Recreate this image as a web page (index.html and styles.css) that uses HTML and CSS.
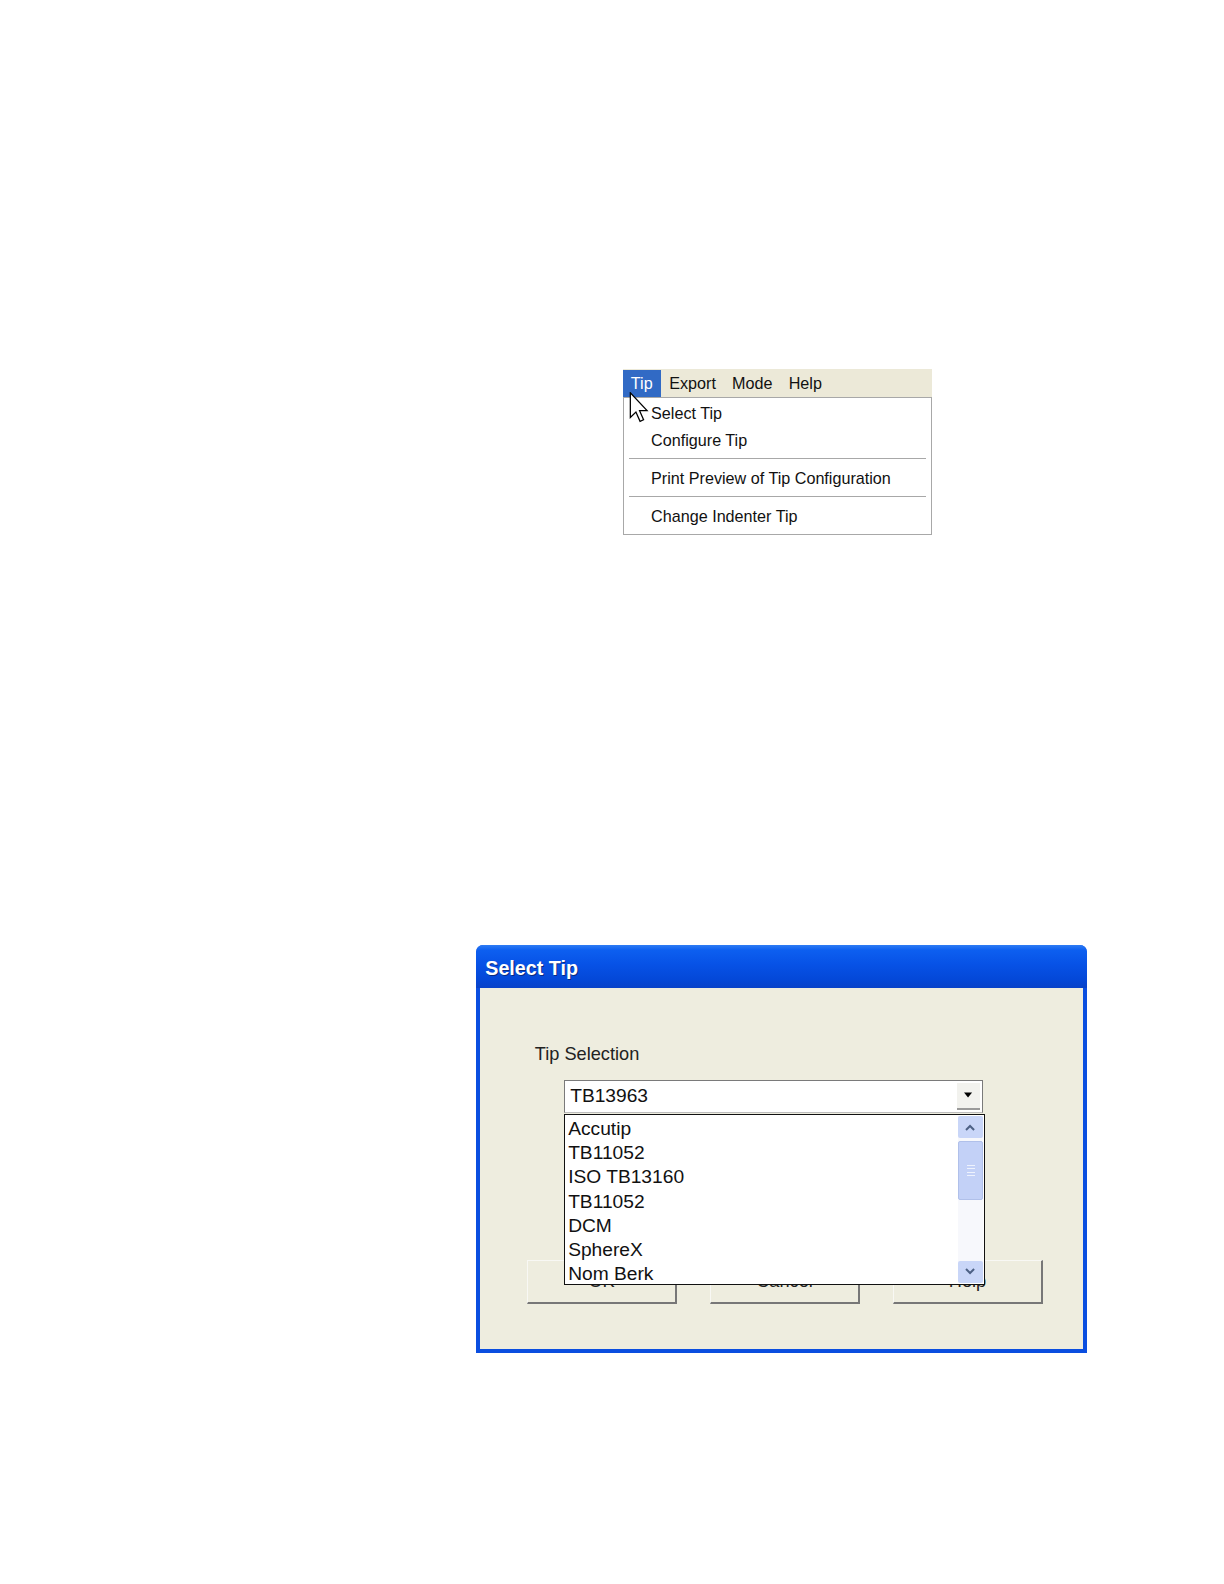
FILE: index.html
```html
<!DOCTYPE html>
<html>
<head>
<meta charset="utf-8">
<link rel="stylesheet" href="styles.css">
</head>
<body>
<div class="page">
  <div class="menu-wrap">
    <div class="menubar">
      <span class="mb-item active">Tip</span>
      <span class="mb-item">Export</span>
      <span class="mb-item">Mode</span>
      <span class="mb-item">Help</span>
    </div>
    <div class="dropdown">
      <div class="dd-item">Select Tip</div>
      <div class="dd-item">Configure Tip</div>
      <div class="dd-sep"></div>
      <div class="dd-item">Print Preview of Tip Configuration</div>
      <div class="dd-sep"></div>
      <div class="dd-item">Change Indenter Tip</div>
    </div>
    <svg class="cursor" width="20" height="30" viewBox="0 0 12 19">
      <path d="M0.5 0.5 L0.5 16 L4 12.6 L6.6 18.4 L8.8 17.4 L6.3 11.7 L11 11.7 Z" fill="#fff" stroke="#000" stroke-width="0.8" stroke-linejoin="miter"/>
    </svg>
  </div>

  <div class="dialog">
    <div class="titlebar">Select Tip</div>
    <div class="dlg-body">
      <div class="label">Tip Selection</div>
      <div class="combo-wrap">
        <div class="combo">
          <span class="combo-text">TB13963</span>
          <span class="combo-btn"><svg width="10" height="6" viewBox="0 0 10 6"><path d="M1 0.5 L9 0.5 L5 5.5 Z" fill="#000"/></svg></span>
        </div>
        <div class="listbox">
          <div class="items">
            <div class="li">Accutip</div>
            <div class="li">TB11052</div>
            <div class="li">ISO TB13160</div>
            <div class="li">TB11052</div>
            <div class="li">DCM</div>
            <div class="li">SphereX</div>
            <div class="li">Nom Berk</div>
          </div>
          <div class="scrollbar">
            <div class="sb-btn"><svg width="10" height="7" viewBox="0 0 10 7"><path d="M1 6 L5 2 L9 6" fill="none" stroke="#4d6185" stroke-width="2"/></svg></div>
            <div class="sb-thumb"><span></span><span></span><span></span><span></span></div>
            <div class="sb-track"></div>
            <div class="sb-btn"><svg width="10" height="7" viewBox="0 0 10 7"><path d="M1 1 L5 5 L9 1" fill="none" stroke="#4d6185" stroke-width="2"/></svg></div>
          </div>
        </div>
      </div>
      <div class="buttons">
        <div class="btn">OK</div>
        <div class="btn">Cancel</div>
        <div class="btn">Help</div>
      </div>
    </div>
  </div>
</div>
</body>
</html>
```

FILE: styles.css
```css
html, body {
  margin: 0;
  padding: 0;
  background: #fff;
  overflow: hidden;
}
.page {
  zoom: 1.011;
  width: 1210px;
  height: 1566px;
  overflow: hidden;
  padding-top: 365px;
  box-sizing: border-box;
  font-family: "Liberation Sans", Arial, sans-serif;
}

/* ---------- Menu ---------- */
.menu-wrap {
  position: relative;
  margin-left: 616px;
  width: 306px;
}
.menubar {
  height: 28px;
  background: #ece9d8;
  display: flex;
  align-items: center;
  font-size: 16px;
  color: #111;
}
.mb-item {
  padding: 0 8px;
  height: 27px;
  line-height: 27px;
}
.mb-item.active {
  background: #316ac5;
  color: #fff;
  width: 22px;
}
.dropdown {
  background: #fff;
  border: 1px solid #a8a8a8;
  box-sizing: border-box;
  width: 306px;
  padding: 2px 0 4px;
  font-size: 16px;
  color: #111;
}
.dd-item {
  height: 26px;
  line-height: 26px;
  padding-left: 27px;
}
.dd-sep {
  height: 1px;
  background: #a8a8a8;
  margin: 5px 5px 6px;
}
.cursor {
  position: absolute;
  left: 6px;
  top: 23px;
}

/* ---------- Dialog ---------- */
.dialog {
  margin-left: 471px;
  margin-top: 406px;
  width: 604px;
  height: 403px;
  box-sizing: border-box;
  display: flex;
  flex-direction: column;
  background: #0a4ee0;
  border-radius: 7px 7px 0 0;
  padding: 0 4px 4px;
}
.titlebar {
  height: 42px;
  margin: 0 -4px;
  padding-left: 9px;
  border-radius: 7px 7px 0 0;
  background: linear-gradient(to bottom, #2e7cf4 0%, #0d5ff0 12%, #0752e6 45%, #0448d8 80%, #0842c8 100%);
  color: #fff;
  font-family: "Liberation Sans", Arial, sans-serif;
  font-weight: bold;
  font-size: 19.5px;
  line-height: 46px;
  text-shadow: 1px 1px 0 #0a2a80;
}
.dlg-body {
  flex: 1;
  background: #eeeddf;
  padding-top: 55px;
  position: relative;
}
.label {
  margin-left: 54px;
  font-size: 18px;
  line-height: 22px;
  color: #222;
}
.combo-wrap {
  position: relative;
  margin-left: 83px;
  margin-top: 14px;
  width: 414px;
}
.combo {
  height: 33px;
  box-sizing: border-box;
  border: 1px solid #7a7a7a;
  border-bottom-color: #bdbdbd;
  background: #fff;
  display: flex;
  align-items: center;
  justify-content: space-between;
  padding-left: 5px;
  padding-right: 2px;
}
.combo-text {
  font-size: 19px;
  color: #111;
}
.combo-btn {
  width: 22px;
  height: 27px;
  display: flex;
  align-items: center;
  justify-content: center;
  background: #f2f2ee;
  border-bottom: 2px solid #9a9a9a;
  box-sizing: border-box;
}
.listbox {
  position: absolute;
  left: 0;
  top: 34px;
  width: 416px;
  height: 169px;
  box-sizing: border-box;
  border: 1px solid #111;
  background: #fff;
  display: flex;
  z-index: 2;
}
.items {
  flex: 1;
  padding-top: 2px;
  padding-left: 3px;
}
.li {
  font-size: 19px;
  line-height: 24px;
  height: 24px;
  color: #111;
}
.scrollbar {
  width: 24px;
  margin: 1px 1px 1px 0;
  display: flex;
  flex-direction: column;
  background: #f7f8fc;
}
.sb-btn {
  height: 22px;
  background: #c9d6f8;
  border-radius: 2px;
  display: flex;
  align-items: center;
  justify-content: center;
}
.sb-thumb {
  margin-top: 3px;
  height: 56px;
  background: #c3d1f7;
  border: 1px solid #b0c0ea;
  border-radius: 2px;
  display: flex;
  flex-direction: column;
  align-items: center;
  justify-content: center;
  gap: 2px;
}
.sb-thumb span {
  width: 8px;
  height: 1px;
  background: #eef2fd;
}
.sb-track {
  flex: 1;
}
.buttons {
  display: flex;
  gap: 32px;
  margin-left: 46px;
  margin-top: 145px;
}
.btn {
  width: 149px;
  height: 44px;
  box-sizing: border-box;
  border-right: 2px solid #777;
  border-bottom: 2px solid #777;
  border-top: 1px solid #f8f8f4;
  border-left: 1px solid #f8f8f4;
  display: flex;
  align-items: center;
  justify-content: center;
  font-size: 18px;
  color: #222;
}
```
